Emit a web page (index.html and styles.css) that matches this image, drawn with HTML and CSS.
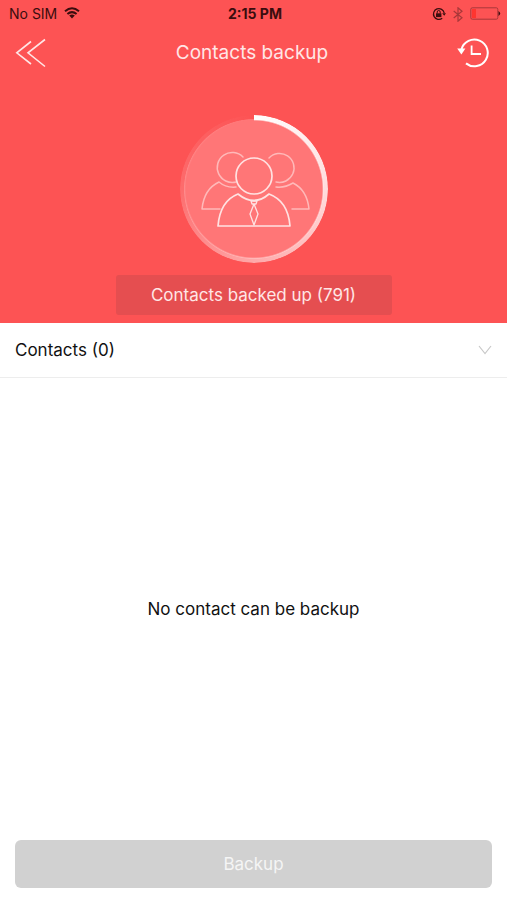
FILE: index.html
```
<!DOCTYPE html>
<html lang="en">
<head>
    <meta charset="UTF-8">
    <meta name="viewport" content="width=device-width, initial-scale=1.0">
    <title>Contacts backup</title>
    <link rel="stylesheet" href="styles.css">
</head>
<body>
    <header class="hero">
        <div class="status-bar">
            <div class="status-left">
                <span>No SIM</span>
                <svg width="16" height="14" viewBox="0 0 16 14" fill="none" stroke="#3a0d0e" stroke-width="2">
                    <path d="M1 4.3Q8-1.7 15 4.3M3.4 7Q8 3.2 12.6 7"/>
                    <path d="M5.2 8.6Q8 6.4 10.8 8.6L8 11.5Z" fill="#3a0d0e" stroke="none"/>
                </svg>
            </div>
            <span class="status-time">2:15 PM</span>
            <div class="status-right">
                <svg width="14" height="14" viewBox="0 0 14 14" fill="none" stroke="#3a0d0e">
                    <path d="M10.2 11.3A5.4 5.4 0 1 1 12.2 6" stroke-width="1.3"/>
                    <path d="M10.2 6.2H14L12.2 8.8Z" fill="#3a0d0e" stroke="none"/>
                    <rect x="4" y="6.3" width="5.4" height="3.8" fill="#3a0d0e" stroke="none"/>
                    <path d="M5.2 6.5V5a1.5 1.5 0 0 1 3 0v1.5"/>
                </svg>
                <svg width="10" height="15" viewBox="0 0 10 15" fill="none" stroke="#a83839" stroke-width="1.2">
                    <path d="M.7 4L9 10.8 5 14.2V.8L9 4.2.7 11"/>
                </svg>
                <svg width="31" height="14" viewBox="0 0 31 14" fill="none">
                    <rect x=".8" y=".8" width="27" height="11.4" rx="1.5" stroke="#a83839"/>
                    <rect x="2" y="2" width="4" height="9" fill="#ff3530"/>
                    <path d="M28.5 4q3.4 2.5 0 5z" fill="#3a0d0e"/>
                </svg>
            </div>
        </div>

        <nav class="nav-bar">
            <button class="icon-button" type="button" aria-label="Back">
                <svg width="32" height="30" viewBox="0 0 32 30" fill="none" stroke="#ffe6e6" stroke-width="1.6">
                    <path d="M16 3.5L1.8 14.8 16 26M30 1.5L13 14.8 30 28.5"/>
                </svg>
            </button>
            <h1>Contacts backup</h1>
            <button class="icon-button" type="button" aria-label="History">
                <svg width="32" height="32" viewBox="0 0 32 32" fill="none" stroke="#fff" stroke-width="2">
                    <path d="M4.4 12.4A13.4 13.4 0 1 1 9 26.4"/>
                    <path d="M.2 11.5H8.4L4.4 17.5Z" fill="#fff" stroke="none"/>
                    <path d="M14.6 8.5V17H24" stroke-width="1.8"/>
                </svg>
            </button>
        </nav>

        <div class="progress">
            <svg class="people" viewBox="0 0 148 148" fill="none" stroke-linejoin="round" stroke-linecap="round">
                <g stroke="#ffb9b9" stroke-width="1.5">
                    <path d="M63 42A15 15 0 1 0 56 67"/>
                    <path d="M40 94H22Q24 74 39 67Q46 73 56 72"/>
                    <path d="M89 43A14.5 14.5 0 1 1 96 67"/>
                    <path d="M112 94H129Q127 75 113 68Q105 73 96 72"/>
                </g>
                <g stroke="#ffe2e2" stroke-width="1.7">
                    <circle cx="74" cy="61" r="18"/>
                    <path d="M58 79Q74 92 89 79Q108 86 110 111H38Q40 86 58 79Z"/>
                    <path d="M71 86H77L76 89H72ZM74 89L78 99 74 110 70 99Z" stroke-width="1.3"/>
                </g>
            </svg>
        </div>

        <p class="summary">Contacts backed up (791)</p>
    </header>

    <main class="content">
        <button class="section-row" type="button">
            <span>Contacts (0)</span>
            <svg width="14" height="10" viewBox="0 0 14 10" fill="none" stroke="#c8c8c8" stroke-width="1.2">
                <path d="M1 1L7 8.5 13 1"/>
            </svg>
        </button>
        <p class="empty">No contact can be backup</p>
    </main>

    <footer class="footer">
        <button class="backup-button" type="button" disabled>Backup</button>
    </footer>
</body>
</html>
```
FILE: styles.css
```
* {
    box-sizing: border-box;
}
body {
    display: flex;
    flex-direction: column;
    min-height: 100vh;
    margin: 0;
    font-family: Inter, "Liberation Sans", sans-serif;
    font-size: 17px;
    line-height: 24px;
    color: #111;
    background: #fff;
}
h1, p {
    margin: 0;
}
button {
    padding: 0;
    border: none;
    background: none;
    font: inherit;
    color: inherit;
}
svg {
    display: block;
}
.hero {
    display: flex;
    flex-direction: column;
    align-items: center;
    padding-bottom: 8px;
    background: #fd5354;
}
.status-bar {
    display: grid;
    grid-template-columns: 1fr auto 1fr;
    align-items: center;
    width: 100%;
    height: 28px;
    padding: 0 6px 0 9px;
    font-size: 14px;
    color: #3a0d0e;
}
.status-left, .status-right {
    display: flex;
    align-items: center;
    gap: 7px;
}
.status-right {
    justify-content: flex-end;
}
.status-time {
    font-weight: 700;
}
.nav-bar {
    display: flex;
    align-items: center;
    justify-content: space-between;
    width: 100%;
    height: 50px;
    padding: 0 18px 0 15px;
}
.nav-bar h1 {
    font-size: 19px;
    font-weight: 400;
    color: #ffe6e6;
}
.progress {
    position: relative;
    width: 148px;
    height: 148px;
    margin-top: 37px;
    border-radius: 50%;
    background: radial-gradient(circle closest-side, #ff7677 0 94%, transparent 95%);
}
/* ring that fades out clockwise from the top */
.progress::before {
    content: "";
    position: absolute;
    inset: 0;
    border-radius: 50%;
    background: conic-gradient(#fff, rgba(255, 255, 255, 0.8) 25%, rgba(255, 255, 255, 0.5) 50%, rgba(255, 255, 255, 0.15) 75%, rgba(255, 255, 255, 0));
    -webkit-mask: radial-gradient(closest-side, transparent 92%, #000 94%);
    mask: radial-gradient(closest-side, transparent 92%, #000 94%);
}
.summary {
    width: 276px;
    max-width: 100%;
    margin-top: 12px;
    padding: 8px;
    border-radius: 3px;
    background: #e54e50;
    color: #ffe6e6;
    text-align: center;
}
.content {
    display: flex;
    flex: 1;
    flex-direction: column;
}
.section-row {
    display: flex;
    align-items: center;
    justify-content: space-between;
    height: 55px;
    padding: 0 15px;
    border-bottom: 1px solid #ededed;
}
.empty {
    margin: auto;
}
.footer {
    padding: 0 15px 12px;
}
.backup-button {
    width: 100%;
    height: 48px;
    border-radius: 6px;
    background: #d1d1d1;
    color: #f5f5f5;
}
```
